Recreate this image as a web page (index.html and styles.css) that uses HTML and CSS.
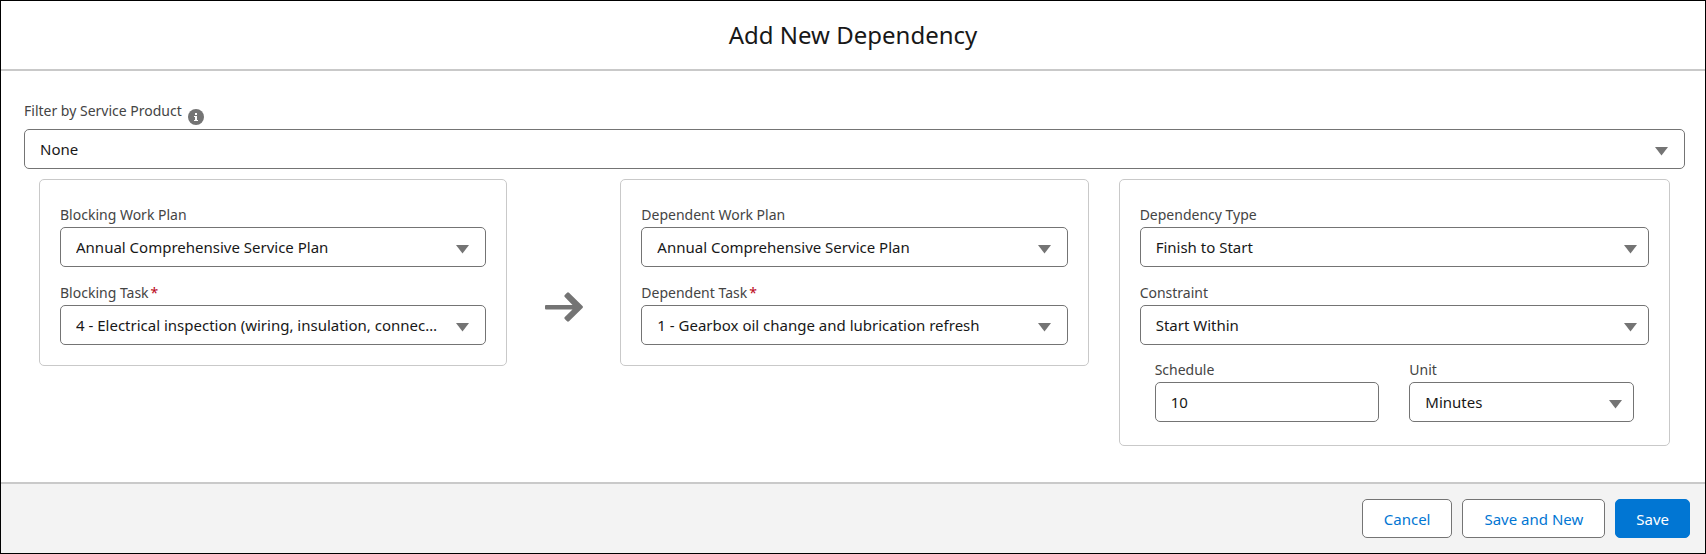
FILE: index.html
```html
<!DOCTYPE html>
<html lang="en">
<head>
    <meta charset="UTF-8">
    <meta name="viewport" content="width=device-width, initial-scale=1.0">
    <title>Add New Dependency</title>
    <link rel="stylesheet" href="styles.css">
</head>
<body>
    <form class="modal">
        <header class="modal-header">
            <h1>Add New Dependency</h1>
        </header>

        <main class="modal-body">
            <div class="filter">
                <div class="filter-label">
                    <label for="serviceProduct">Filter by Service Product</label>
                    <svg class="info-icon" viewBox="0 0 16 16" aria-hidden="true">
                        <circle cx="8" cy="8" r="8" fill="#747474"/>
                        <path d="M7 4h2v2H7zM6 7h3v4h1v1H6v-1h1V8H6z" fill="#fff"/>
                    </svg>
                </div>
                <div class="select-wrap">
                    <select id="serviceProduct"><option>None</option></select>
                    <svg class="caret" viewBox="0 0 13 9" aria-hidden="true"><path d="M0 0h13L6.5 8.5z"/></svg>
                </div>
            </div>

            <div class="columns">
                <section class="card">
                    <div class="field">
                        <label for="blockingPlan">Blocking Work Plan</label>
                        <div class="select-wrap">
                            <select id="blockingPlan"><option>Annual Comprehensive Service Plan</option></select>
                            <svg class="caret" viewBox="0 0 13 9" aria-hidden="true"><path d="M0 0h13L6.5 8.5z"/></svg>
                        </div>
                    </div>
                    <div class="field">
                        <label for="blockingTask">Blocking Task<span class="required">*</span></label>
                        <div class="select-wrap">
                            <select id="blockingTask" required><option>4 - Electrical inspection (wiring, insulation, connections)</option></select>
                            <svg class="caret" viewBox="0 0 13 9" aria-hidden="true"><path d="M0 0h13L6.5 8.5z"/></svg>
                        </div>
                    </div>
                </section>

                <div class="arrow">
                    <svg viewBox="0 0 38 30" aria-hidden="true">
                        <path d="M1 13h26.500L19.800 5a1.500 1.500 0 0 1 0-2L22 .700a1.500 1.500 0 0 1 2 0L37.500 14a1.500 1.500 0 0 1 0 2L24 29.300a1.500 1.500 0 0 1-2 0L19.800 27a1.500 1.500 0 0 1 0-2l7.700-7.500H1a1 1 0 0 1-1-1V14a1 1 0 0 1 1-1z"/>
                    </svg>
                </div>

                <section class="card">
                    <div class="field">
                        <label for="dependentPlan">Dependent Work Plan</label>
                        <div class="select-wrap">
                            <select id="dependentPlan"><option>Annual Comprehensive Service Plan</option></select>
                            <svg class="caret" viewBox="0 0 13 9" aria-hidden="true"><path d="M0 0h13L6.5 8.5z"/></svg>
                        </div>
                    </div>
                    <div class="field">
                        <label for="dependentTask">Dependent Task<span class="required">*</span></label>
                        <div class="select-wrap">
                            <select id="dependentTask" required><option>1 - Gearbox oil change and lubrication refresh</option></select>
                            <svg class="caret" viewBox="0 0 13 9" aria-hidden="true"><path d="M0 0h13L6.5 8.5z"/></svg>
                        </div>
                    </div>
                </section>

                <section class="card card-type">
                    <div class="field">
                        <label for="dependencyType">Dependency Type</label>
                        <div class="select-wrap">
                            <select id="dependencyType"><option>Finish to Start</option></select>
                            <svg class="caret" viewBox="0 0 13 9" aria-hidden="true"><path d="M0 0h13L6.5 8.5z"/></svg>
                        </div>
                    </div>
                    <div class="field">
                        <label for="constraint">Constraint</label>
                        <div class="select-wrap">
                            <select id="constraint"><option>Start Within</option></select>
                            <svg class="caret" viewBox="0 0 13 9" aria-hidden="true"><path d="M0 0h13L6.5 8.5z"/></svg>
                        </div>
                    </div>
                    <div class="field-row">
                        <div class="field">
                            <label for="schedule">Schedule</label>
                            <input type="text" id="schedule" value="10">
                        </div>
                        <div class="field">
                            <label for="unit">Unit</label>
                            <div class="select-wrap">
                                <select id="unit"><option>Minutes</option></select>
                                <svg class="caret" viewBox="0 0 13 9" aria-hidden="true"><path d="M0 0h13L6.5 8.5z"/></svg>
                            </div>
                        </div>
                    </div>
                </section>
            </div>
        </main>

        <footer class="modal-footer">
            <button type="button">Cancel</button>
            <button type="button">Save and New</button>
            <button type="submit" class="save-btn">Save</button>
        </footer>
    </form>
</body>
</html>
```
FILE: styles.css
```css
* {
    margin: 0;
    padding: 0;
    box-sizing: border-box;
}

body {
    font-family: 'Segoe UI', 'Noto Sans', sans-serif;
    font-size: 15px;
    color: #181818;
    background-color: white;
}

.modal {
    min-height: 100vh;
    display: flex;
    flex-direction: column;
    border: 1px solid black;
}

.modal-header {
    padding: 18px 16px;
    border-bottom: 2px solid #c9c9c9;
    text-align: center;
}

.modal-header h1 {
    font-size: 24px;
    font-weight: 400;
    line-height: 32px;
}

.modal-body {
    flex: 1;
    padding: 30px 20px 20px 23px;
}

label {
    display: block;
    font-size: 14px;
    line-height: 20px;
    color: #444;
}

.required {
    color: #ba0517;
    margin-left: 2px;
}

.filter-label {
    display: flex;
    gap: 6px;
    height: 24px;
    margin-bottom: 4px;
}

.info-icon {
    width: 16px;
    height: 16px;
    align-self: flex-end;
}

.select-wrap {
    position: relative;
}

select,
input {
    display: block;
    width: 100%;
    height: 40px;
    padding: 0 15px;
    border: 1px solid #747474;
    border-radius: 5px;
    background-color: white;
    color: #181818;
    font-family: inherit;
    font-size: 15px;
}

select {
    appearance: none;
    padding: 0 44px 0 15px;
    overflow: hidden;
    text-overflow: ellipsis;
    white-space: nowrap;
}

.caret {
    position: absolute;
    top: 18px;
    right: 17px;
    width: 13px;
    height: 9px;
    fill: #747474;
    pointer-events: none;
}

.columns {
    display: grid;
    grid-template-columns: 30fr 5fr 30fr 35fr;
    align-items: start;
    margin-top: 10px;
}

.card {
    min-width: 0;
    margin: 0 15px;
    padding: 25px 20px 20px;
    border: 1px solid #c9c9c9;
    border-radius: 5px;
}

.card-type {
    padding-bottom: 23px;
}

.card-type .caret {
    right: 12px;
}

.field + .field {
    margin-top: 16px;
}

.field label {
    margin-bottom: 2px;
}

.field-row {
    display: grid;
    grid-template-columns: 1fr 1fr;
    gap: 30px;
    margin-top: 15px;
    padding: 0 15px;
}

.field-row .field {
    margin-top: 0;
}

.arrow {
    display: flex;
    justify-content: center;
    margin-top: 113px;
}

.arrow svg {
    width: 38px;
    height: 30px;
    fill: #747474;
}

.modal-footer {
    display: flex;
    justify-content: flex-end;
    gap: 10px;
    padding: 15px;
    border-top: 2px solid #c9c9c9;
    background-color: #f3f3f3;
}

button {
    height: 39px;
    padding: 0 21px;
    border: 1px solid #747474;
    border-radius: 5px;
    background-color: white;
    color: #0176d3;
    font-family: inherit;
    font-size: 15px;
    cursor: pointer;
}

.save-btn {
    padding: 0 20px;
    border-color: #0176d3;
    background-color: #0176d3;
    color: white;
}
```
